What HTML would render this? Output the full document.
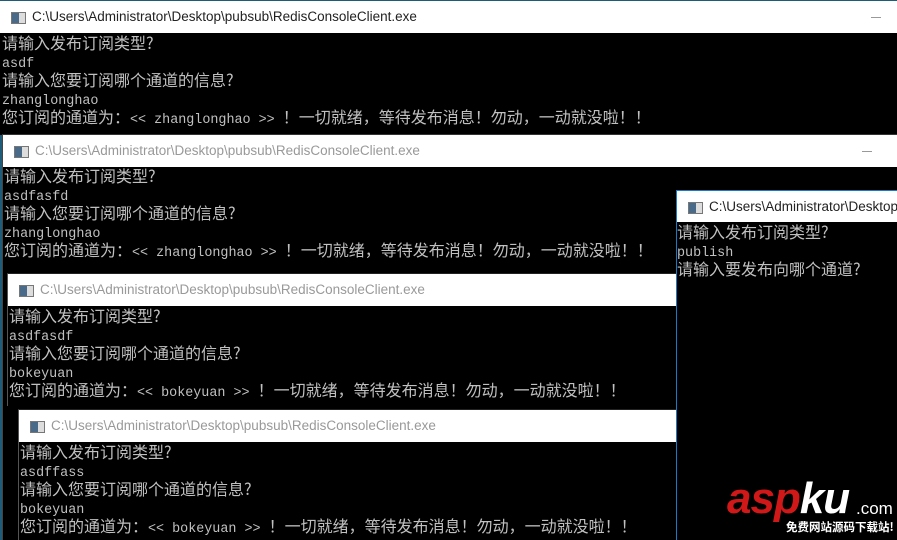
<!DOCTYPE html>
<html><head><meta charset="utf-8"><style>
html,body{margin:0;width:897px;height:540px;overflow:hidden}
body{background:#1f5c7a;position:relative;font-family:"Liberation Sans",sans-serif}
.w{position:absolute;background:#000;border-left:1px solid #444;overflow:hidden}
.t{position:absolute;left:0;right:0;top:0;height:32px;background:#fff;font-size:13.5px;color:#999;line-height:32px;white-space:nowrap;overflow:hidden}
.t.a{color:#222}
.t .i{position:absolute;left:11px;top:11px;width:13px;height:10px;border:1px solid #777;background:linear-gradient(90deg,#4a6a8a 0 55%,#ddd 55%)}
.t .x{position:absolute;left:32px}
.t .m{position:absolute;right:29px;top:16px;width:10px;height:1px;background:#999}
.c{position:absolute;left:2px;color:#c0c0c0}
.c div{height:18.4px;line-height:18.4px;white-space:pre;font-family:"Noto Sans CJK SC","WenQuanYi Zen Hei",sans-serif;font-size:16px;overflow:visible}
.c .l{font-family:"Liberation Mono",monospace;font-size:13.4px;line-height:10px}
</style></head><body>

<div class="w" style="left:0;top:1px;width:897px;height:134px;border:none">
 <div class="t a"><span class="i"></span><span class="x">C:\Users\Administrator\Desktop\pubsub\RedisConsoleClient.exe</span><span class="m" style="right:16px"></span></div>
 <div class="c" style="top:32px;left:2px">
<div>请输入发布订阅类型?</div>
<div><span class="l">asdf</span></div>
<div>请输入您要订阅哪个通道的信息?</div>
<div><span class="l">zhanglonghao</span></div>
<div>您订阅的通道为：<span class="l">&lt;&lt; zhanglonghao &gt;&gt; </span>！一切就绪，等待发布消息！勿动，一动就没啦！！</div>
 </div>
</div>

<div class="w" style="left:2px;top:134px;width:895px;height:406px;border-top:1px solid #333">
 <div class="t"><span class="i"></span><span class="x">C:\Users\Administrator\Desktop\pubsub\RedisConsoleClient.exe</span><span class="m" style="right:26px"></span></div>
 <div class="c" style="top:31px;left:1px">
<div>请输入发布订阅类型?</div>
<div><span class="l">asdfasfd</span></div>
<div>请输入您要订阅哪个通道的信息?</div>
<div><span class="l">zhanglonghao</span></div>
<div>您订阅的通道为：<span class="l">&lt;&lt; zhanglonghao &gt;&gt; </span>！一切就绪，等待发布消息！勿动，一动就没啦！！</div>
 </div>
</div>

<div class="w" style="left:7px;top:273px;width:670px;height:132px;border-left:1px solid #555;border-top:1px solid #222">
 <div class="t"><span class="i"></span><span class="x">C:\Users\Administrator\Desktop\pubsub\RedisConsoleClient.exe</span></div>
 <div class="c" style="top:32px;left:1px">
<div>请输入发布订阅类型?</div>
<div><span class="l">asdfasdf</span></div>
<div>请输入您要订阅哪个通道的信息?</div>
<div><span class="l">bokeyuan</span></div>
<div>您订阅的通道为：<span class="l">&lt;&lt; bokeyuan &gt;&gt; </span>！一切就绪，等待发布消息！勿动，一动就没啦！！</div>
 </div>
</div>

<div class="w" style="left:18px;top:409px;width:659px;height:131px;border-left:1px solid #555;border-top:1px solid #222">
 <div class="t"><span class="i"></span><span class="x">C:\Users\Administrator\Desktop\pubsub\RedisConsoleClient.exe</span></div>
 <div class="c" style="top:32px;left:1px">
<div>请输入发布订阅类型?</div>
<div><span class="l">asdffass</span></div>
<div>请输入您要订阅哪个通道的信息?</div>
<div><span class="l">bokeyuan</span></div>
<div>您订阅的通道为：<span class="l">&lt;&lt; bokeyuan &gt;&gt; </span>！一切就绪，等待发布消息！勿动，一动就没啦！！</div>
 </div>
</div>

<div class="w" style="left:676px;top:190px;width:221px;height:350px;border:1px solid #1979ca;border-right:none;border-bottom:none">
 <div class="t a" style="height:31px;line-height:31px"><span class="i"></span><span class="x">C:\Users\Administrator\Desktop\pubsub</span></div>
 <div class="c" style="top:31px;left:0">
<div>请输入发布订阅类型?</div>
<div><span class="l">publish</span></div>
<div>请输入要发布向哪个通道?</div>
 </div>
</div>

<div style="position:absolute;left:727px;top:477px;font-family:'Liberation Sans',sans-serif;font-style:italic;font-weight:bold;font-size:44px;line-height:44px;letter-spacing:-1px"><span style="color:#d01818">asp</span><span style="color:#fff">ku</span></div>
<div style="position:absolute;left:856px;top:499px;font-family:'Liberation Sans',sans-serif;font-size:17px;color:#fff">.com</div>
<div style="position:absolute;left:786px;top:520px;font-family:'Noto Sans CJK SC',sans-serif;font-size:11.5px;font-weight:bold;color:#fff;line-height:14px">免费网站源码下载站!</div>
</body></html>
